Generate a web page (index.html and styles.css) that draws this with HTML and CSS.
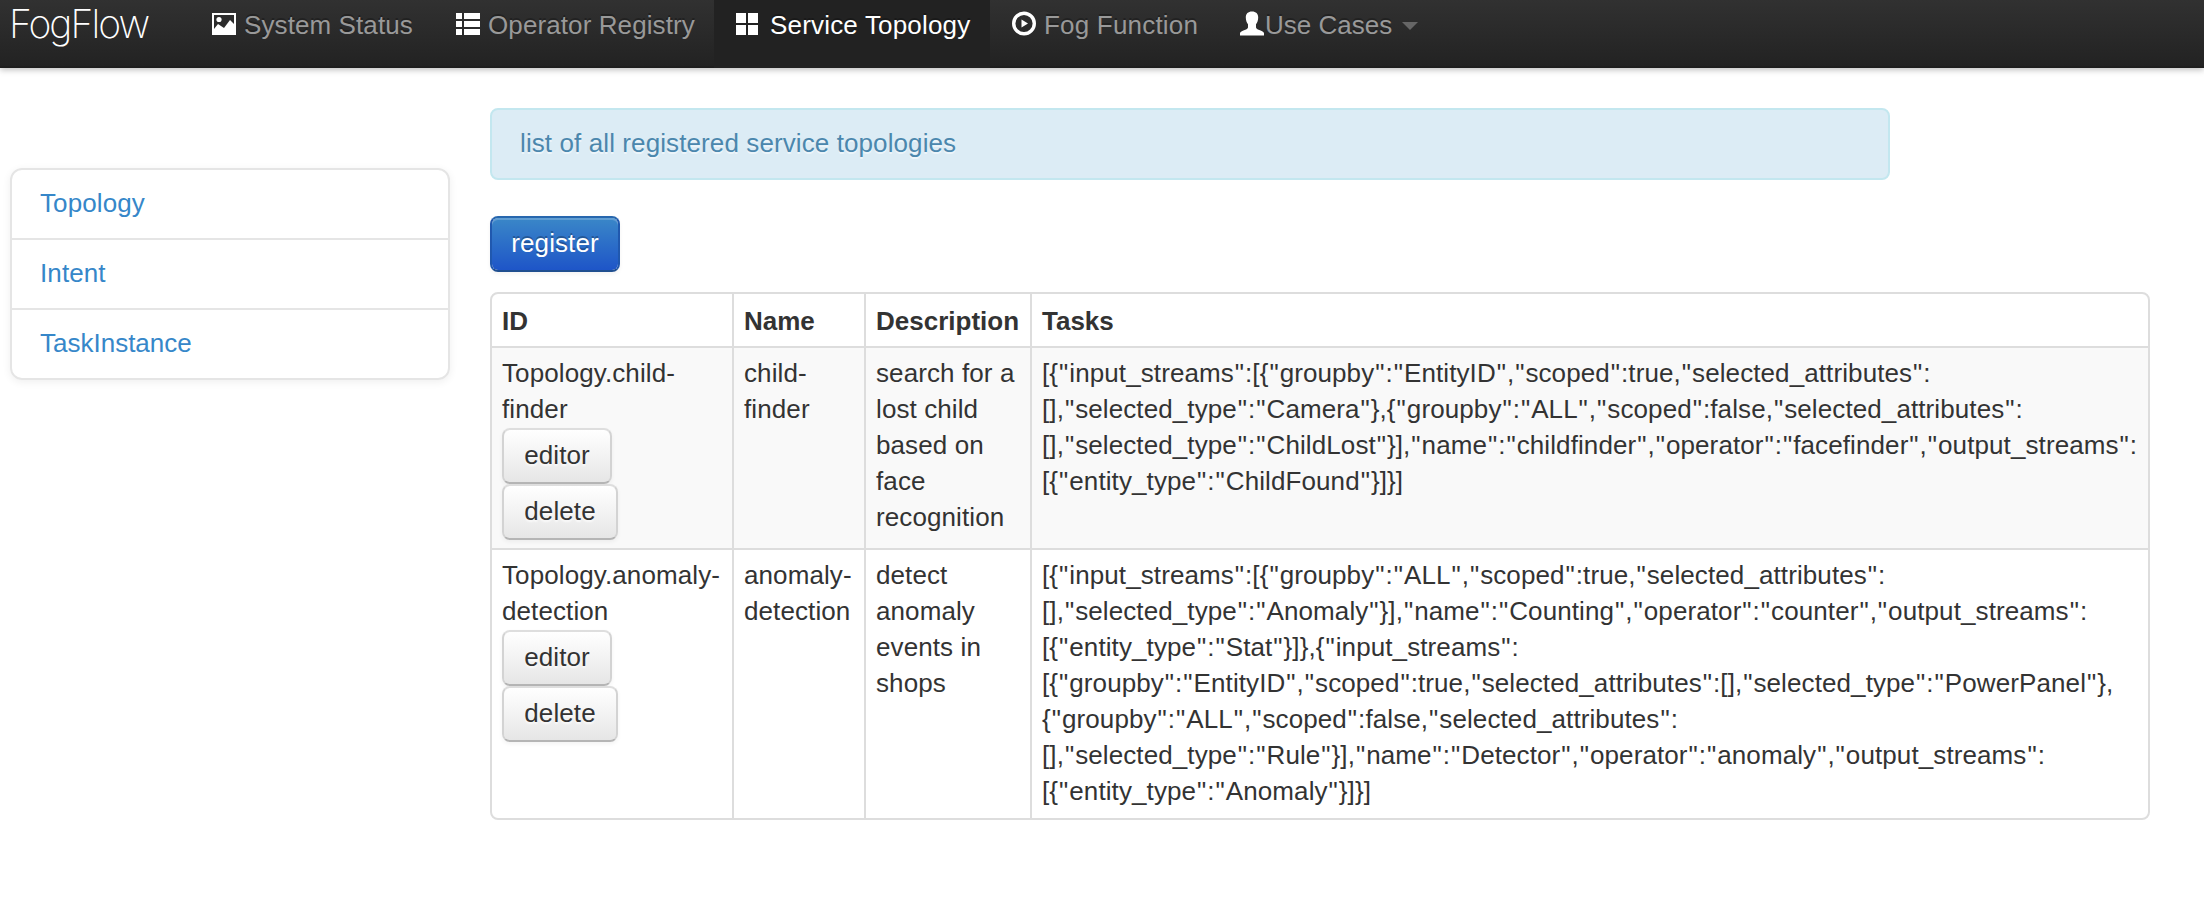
FILE: index.html
```html
<!DOCTYPE html>
<html lang="en">
<head>
<meta charset="utf-8">
<title>FogFlow</title>
<link rel="stylesheet" href="styles.css">
</head>
<body>
<header class="navbar">
  <a class="brand">FogFlow</a>
  <nav class="nav">
    <a class="nav-link nav-status"><svg class="icon" viewBox="0 0 24 24"><path fill="#fff" fill-rule="evenodd" d="M0 1h24v22H0zM2 3v14l4-5 3 2 3 2 6-8 4 4V3z"/><circle cx="7" cy="7.5" r="2.6" fill="#fff"/></svg><span>System Status</span></a>
    <a class="nav-link nav-operator"><svg class="icon" viewBox="0 0 24 24" fill="#fff"><path d="M0 1h6v6H0zM8 1h16v6H8zM0 9h6v6H0zM8 9h16v6H8zM0 17h6v6H0zM8 17h16v6H8z"/></svg><span>Operator Registry</span></a>
    <a class="nav-link nav-topology active"><svg class="icon" viewBox="0 0 24 24" fill="#fff"><path d="M0 1h10v10H0zM12 1h10v10H12zM0 13h10v10H0zM12 13h10v10H12z"/></svg><span>Service Topology</span></a>
    <a class="nav-link nav-fog"><svg class="icon" viewBox="0 0 24 24"><circle cx="12" cy="11.5" r="10.300" fill="none" stroke="#fff" stroke-width="3.400"/><path fill="#fff" d="M9.500 7.500v8l6.500-4z"/></svg><span>Fog Function</span></a>
    <a class="nav-link nav-cases"><svg class="icon" viewBox="0 0 24 24"><path fill="#fff" d="M12-.5c4 0 6.200 2.200 6.200 6 0 3-1 5.200-2.200 6.800v3.200c.5 1.500 2 2 4 2.800 2.500 1 4 1.800 4 3V23.500H0V21.300c0-1.200 1.500-2 4-3 2-.8 3.500-1.300 4-2.800v-3.200C6.800 10.700 5.800 8.500 5.800 5.500c0-3.800 2.200-6 6.200-6z"/></svg><span>Use Cases</span><i class="caret"></i></a>
  </nav>
</header>
<div class="page">
  <aside class="sidebar">
    <a class="side-link">Topology</a>
    <a class="side-link">Intent</a>
    <a class="side-link">TaskInstance</a>
  </aside>
  <main class="content">
    <div class="alert">list of all registered service topologies</div>
    <button class="btn btn-primary">register</button>
    <table class="table">
      <colgroup><col class="col-id"><col class="col-name"><col class="col-desc"><col class="col-tasks"></colgroup>
      <thead>
        <tr><th>ID</th><th>Name</th><th>Description</th><th>Tasks</th></tr>
      </thead>
      <tbody>
        <tr class="odd">
          <td>Topology.child-<br>finder<div class="actions"><button class="btn btn-editor">editor</button><button class="btn btn-delete">delete</button></div></td>
          <td>child-<br>finder</td>
          <td>search for a<br>lost child<br>based on<br>face<br>recognition</td>
          <td><span class="line">[{"input_streams":[{"groupby":"EntityID","scoped":true,"selected_attributes":</span><span class="line">[],"selected_type":"Camera"},{"groupby":"ALL","scoped":false,"selected_attributes":</span><span class="line">[],"selected_type":"ChildLost"}],"name":"childfinder","operator":"facefinder","output_streams":</span><span class="line">[{"entity_type":"ChildFound"}]}]</span></td>
        </tr>
        <tr>
          <td>Topology.anomaly-<br>detection<div class="actions"><button class="btn btn-editor">editor</button><button class="btn btn-delete">delete</button></div></td>
          <td>anomaly-<br>detection</td>
          <td>detect<br>anomaly<br>events in<br>shops</td>
          <td><span class="line">[{"input_streams":[{"groupby":"ALL","scoped":true,"selected_attributes":</span><span class="line">[],"selected_type":"Anomaly"}],"name":"Counting","operator":"counter","output_streams":</span><span class="line">[{"entity_type":"Stat"}]},{"input_streams":</span><span class="line">[{"groupby":"EntityID","scoped":true,"selected_attributes":[],"selected_type":"PowerPanel"},</span><span class="line">{"groupby":"ALL","scoped":false,"selected_attributes":</span><span class="line">[],"selected_type":"Rule"}],"name":"Detector","operator":"anomaly","output_streams":</span><span class="line">[{"entity_type":"Anomaly"}]}]</span></td>
        </tr>
      </tbody>
    </table>
  </main>
</div>
<script src="quotes.js"></script>
</body>
</html>
```
FILE: quotes.js
```js
// Gives the quote marks in the task JSON a little room on both sides.
document.querySelectorAll(".line").forEach(function (line) {
  line.innerHTML = line.textContent.replace(/"/g, '<span class="quote">"</span>');
});
```
FILE: styles.css
```css
* { box-sizing: border-box; }
html, body { margin: 0; padding: 0; }
body {
  background: #fff;
  color: #333;
  font-family: "Liberation Sans", Arial, sans-serif;
  font-size: 26px;
  letter-spacing: .1px;
  line-height: 36px;
  overflow: hidden;
}

/* Top bar */
.navbar {
  display: flex;
  height: 68px;
  background: linear-gradient(#313131, #222);
  box-shadow: 0 2px 6px rgba(0, 0, 0, .25), inset 0 -2px 0 rgba(0, 0, 0, .1);
}
.brand {
  width: 192px;
  padding: 6px 0 0 9px;
  color: #fff;
  font-family: Inter, "Liberation Sans", sans-serif;
  font-size: 39px;
  font-weight: 200;
  letter-spacing: -1.9px;
  line-height: 36px;
}
.nav { display: flex; }
.nav-link {
  display: flex;
  align-items: flex-start;
  padding: 7px 0 0 22px;
  color: #999;
  text-shadow: 0 -2px 0 rgba(0, 0, 0, .25);
  white-space: nowrap;
}
.icon { width: 24px; height: 24px; margin: 5px 8px 0 0; overflow: visible; }
.nav-status { width: 244px; padding-left: 20px; }
.nav-operator { width: 278px; padding-left: 20px; }
.nav-topology { width: 276px; letter-spacing: .18px; }
.nav-topology .icon { margin-right: 10px; }
.nav-fog { width: 228px; letter-spacing: .2px; }
.nav-cases { width: 220px; letter-spacing: 0; }
.nav-cases .icon { margin-right: 1px; }
.active { color: #fff; background: #222; }
.caret {
  margin: 15px 0 0 10px;
  border: 8px solid transparent;
  border-top-color: #666;
  border-bottom: 0;
}

/* Body layout */
.page {
  display: grid;
  grid-template-columns: 440px 1660px;
  column-gap: 40px;
  padding: 40px 0 0 10px;
  align-items: start;
}
.sidebar {
  margin-top: 60px;
  border: 2px solid #e5e5e5;
  border-radius: 12px;
  box-shadow: 0 2px 8px rgba(0, 0, 0, .065);
}
.side-link { display: block; height: 70px; padding: 15px 28px 0; color: #3687c9; border-bottom: 2px solid #e5e5e5; }
.side-link:last-child { height: 68px; border-bottom: 0; letter-spacing: 0; }
.content { display: flex; flex-direction: column; align-items: flex-start; }
.alert {
  width: 1400px;
  height: 72px;
  margin-bottom: 36px;
  padding: 15px 28px;
  color: #4b87ad;
  background: #dcecf5;
  border: 2px solid #c3e7ef;
  border-radius: 8px;
  text-shadow: 0 2px 0 rgba(255, 255, 255, .5);
}

/* Buttons */
.btn {
  display: block;
  height: 56px;
  padding: 7px 0 9px;
  color: #333;
  font: inherit;
  letter-spacing: inherit;
  text-align: center;
  background: linear-gradient(#fff, #e6e6e6) padding-box;
  border: 2px solid #d3d3d3;
  border-top-color: #dedede;
  border-bottom-color: #b5b5b5;
  border-radius: 8px;
  box-shadow: inset 0 2px 0 rgba(255, 255, 255, .2), 0 2px 4px rgba(0, 0, 0, .05);
  text-shadow: 0 2px 2px rgba(255, 255, 255, .75);
}
.btn-editor { width: 110px; }
.btn-delete { width: 116px; }
.btn-primary {
  width: 130px;
  margin-bottom: 20px;
  color: #fff;
  background: linear-gradient(#3a87c8, #1e55c8) padding-box;
  border-color: #2767ae #2058ae #204f90;
  text-shadow: 0 -2px 0 rgba(0, 0, 0, .25);
}
.actions { padding-top: 1px; }

/* Topology table */
.table {
  width: 1660px;
  table-layout: fixed;
  border: 2px solid #ddd;
  border-radius: 8px;
  border-collapse: separate;
  border-spacing: 0;
}
.col-id { width: 240px; }
.col-name { width: 132px; }
.col-desc { width: 166px; }
th, td {
  padding: 7px 0 9px 10px;
  text-align: left;
  vertical-align: top;
  white-space: nowrap;
  border-left: 2px solid #ddd;
}
td { border-top: 2px solid #ddd; }
th { padding: 9px 0 7px 10px; letter-spacing: 0; }
th:first-child, td:first-child { border-left: 0; }
.odd td { height: 202px; background: #f9f9f9; padding-bottom: 8px; }
.line { display: block; width: max-content; }
.quote { padding: 0 .92px; }
```
